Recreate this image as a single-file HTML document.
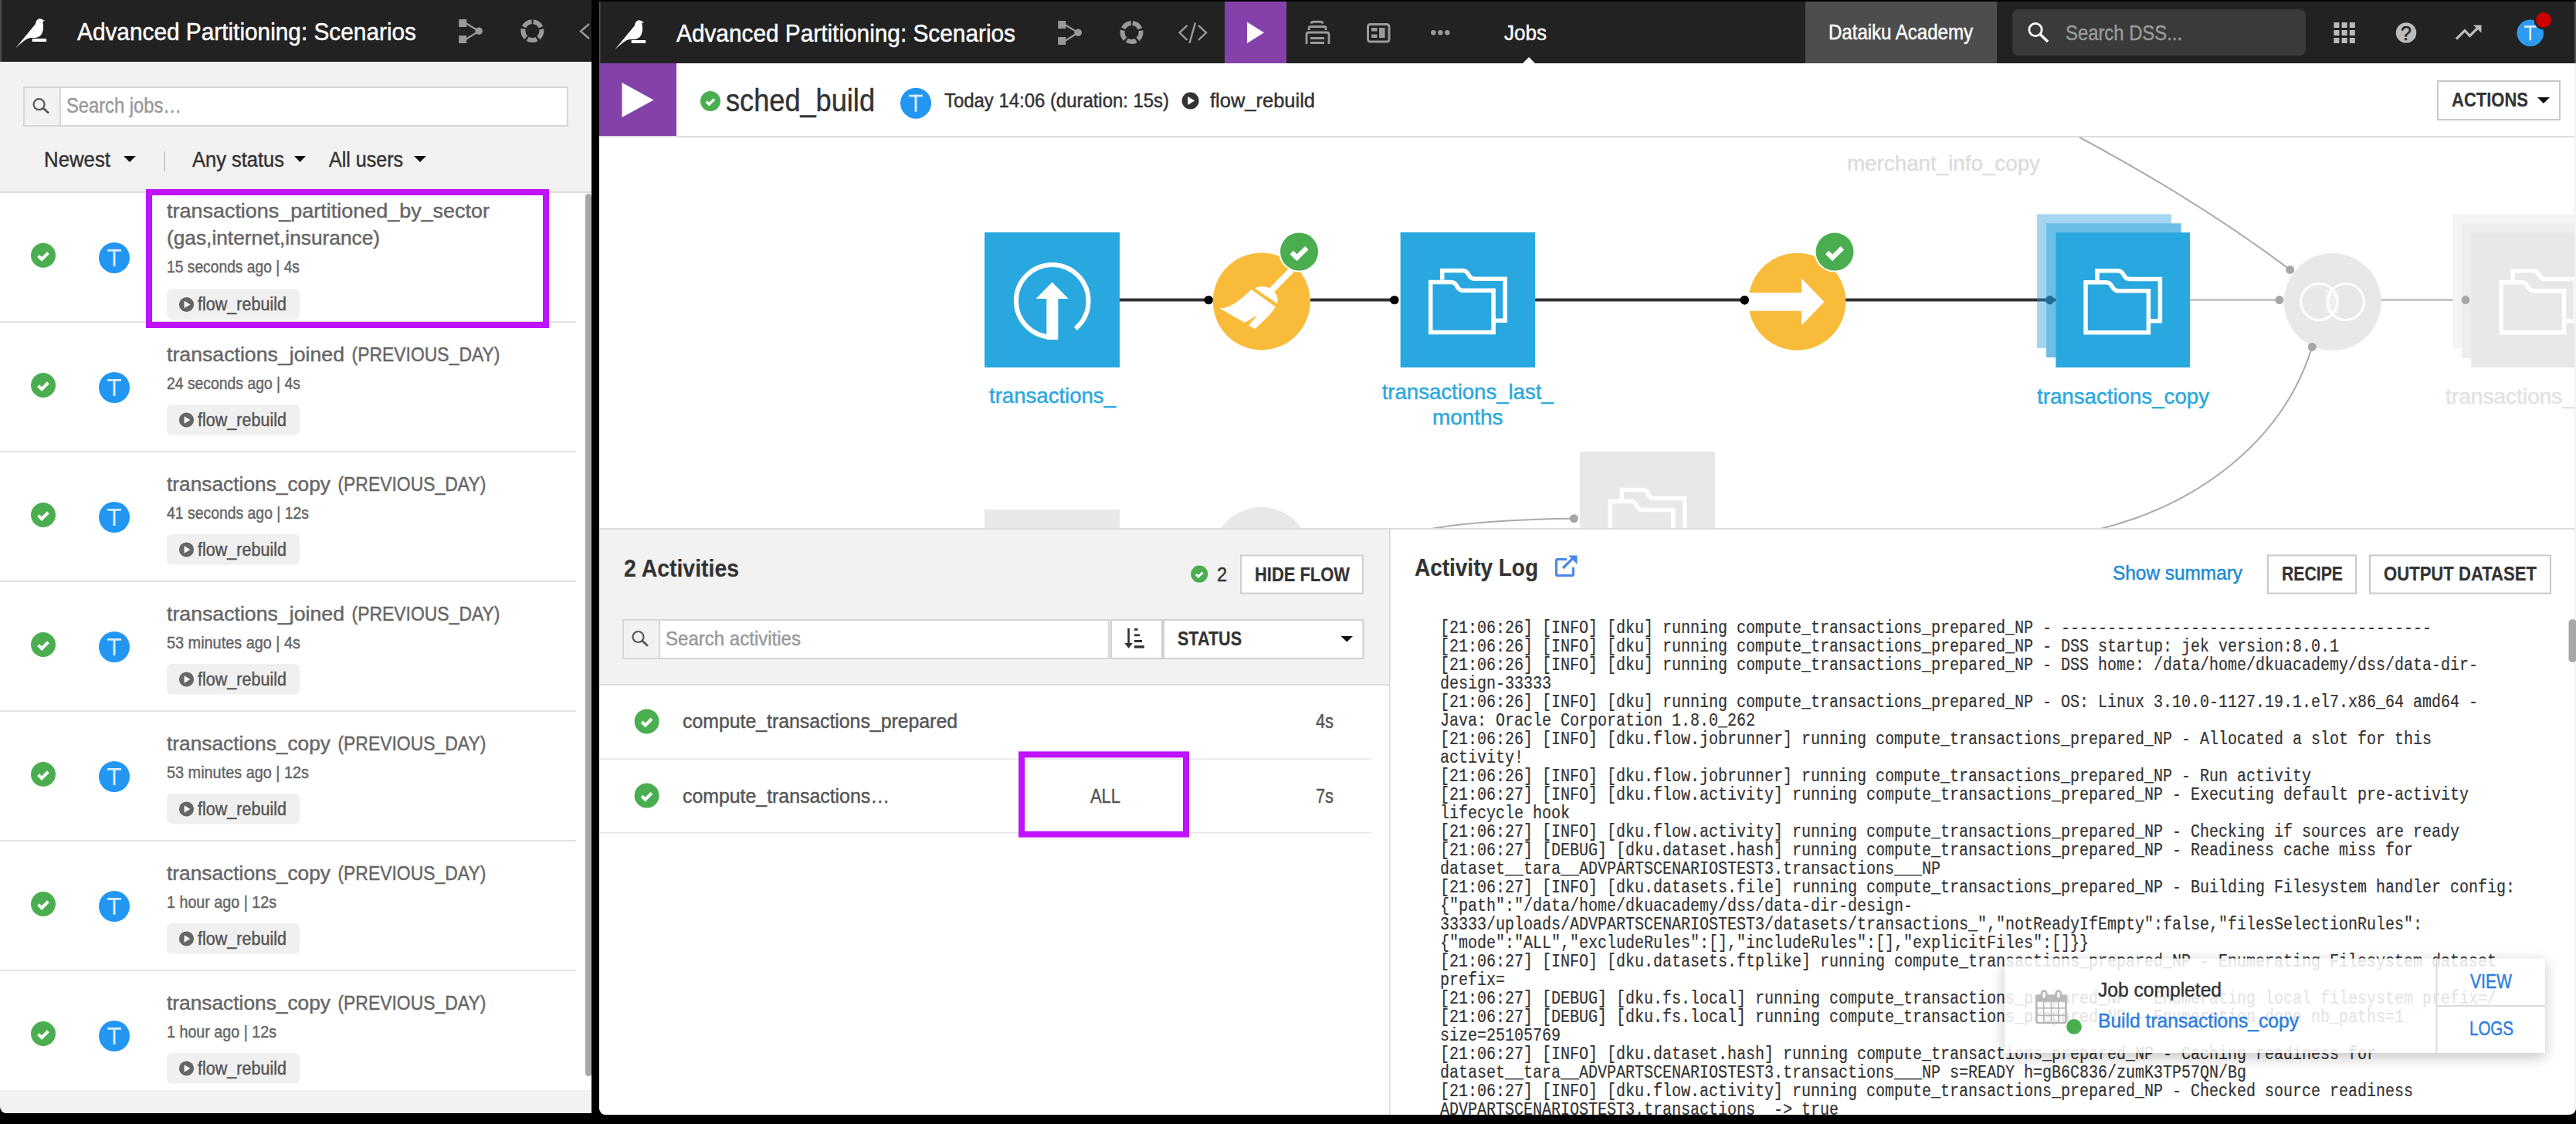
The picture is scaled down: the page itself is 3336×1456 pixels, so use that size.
<!DOCTYPE html>
<html><head><meta charset="utf-8"><title>Jobs - Dataiku</title>
<style>html,body{margin:0;padding:0;background:#000;width:3336px;height:1456px}
</style></head>
<body>
<svg width="3336" height="1456" viewBox="0 0 3336 1456" font-family="'Liberation Sans', sans-serif" style="display:block">
<rect x="0" y="0" width="3336" height="1456" fill="#000" />
<clipPath id="lp"><path d="M0 0 H766 V1442 H10 Q0 1442 0 1432 Z"/></clipPath>
<g clip-path="url(#lp)">
<rect x="0" y="0" width="766" height="1442" fill="#f2f2f2" />
<rect x="0" y="0" width="766" height="80" fill="#222" />
<rect x="0" y="0" width="2" height="80" fill="#4a4a4a" />
<path d="M20.0 62.5 L46.0 31.0 C46.5 26.5 49.0 24.3 51.5 24.3 C54.0 24.3 55.5 25.5 56.0 26.3 L58.3 26.0 L55.2 28.6 C56.5 33.0 56.5 40.0 54.0 44.0 C52.0 47.5 48.5 49.0 44.0 49.0 L40.0 49.0 C36.0 49.5 33.0 50.5 20.0 62.5 Z" fill="#fff" />
<rect x="41.7" y="50" width="18.4" height="4" fill="#fff" />
<text x="100" y="52" font-size="32" fill="#fff" stroke="#fff" stroke-width="0.45" textLength="439" lengthAdjust="spacingAndGlyphs" >Advanced Partitioning: Scenarios</text>
<rect x="594.2" y="25" width="10" height="10" fill="#999" />
<rect x="594.2" y="46" width="10" height="10" fill="#999" />
<circle cx="620.2" cy="40.2" r="4.8" fill="#999" />
<path d="M603.2 30 L620.2 40.2 L603.2 51" fill="none" stroke="#999" stroke-width="2.2" />
<circle cx="689.4" cy="40.1" r="12" fill="none" stroke="#999" stroke-width="6" stroke-dasharray="12.480 2.6" transform="rotate(-90 689.4 40.1)" stroke-dashoffset="-1.300"/>
<path d="M763 31 L752 40.5 L763 50" fill="none" stroke="#999" stroke-width="2.4" />
<rect x="31" y="113" width="704" height="50" fill="#fff" stroke="#d6d6d6" stroke-width="2"/>
<rect x="32" y="114" width="45" height="48" fill="#f2f2f2" />
<rect x="77" y="113" width="2" height="50" fill="#d6d6d6" />
<circle cx="50.6" cy="135.2" r="7" fill="none" stroke="#555" stroke-width="2.2"/>
<path d="M55.77 139.91 L63 146.5" fill="none" stroke="#555" stroke-width="2.8000000000000003" />
<text x="86" y="146" font-size="27" fill="#999" stroke="#999" stroke-width="0.45" textLength="149" lengthAdjust="spacingAndGlyphs" >Search jobs…</text>
<text x="57" y="216" font-size="27" fill="#333" stroke="#333" stroke-width="0.45" textLength="86" lengthAdjust="spacingAndGlyphs" >Newest</text>
<path d="M160 202 L176 202 L168.0 210 Z" fill="#111" />
<rect x="212" y="196" width="2" height="26" fill="#c8c8c8" />
<text x="249" y="216" font-size="27" fill="#333" stroke="#333" stroke-width="0.45" textLength="119" lengthAdjust="spacingAndGlyphs" >Any status</text>
<path d="M381 202 L396 202 L388.5 210 Z" fill="#111" />
<text x="426" y="216" font-size="27" fill="#333" stroke="#333" stroke-width="0.45" textLength="96" lengthAdjust="spacingAndGlyphs" >All users</text>
<path d="M536 202 L552 202 L544.0 210 Z" fill="#111" />
<rect x="0" y="248" width="766" height="2" fill="#dcdcdc" />
<rect x="0" y="250" width="766" height="1162" fill="#fff" />
<rect x="0" y="1412" width="766" height="30" fill="#f2f2f2" />
<circle cx="56" cy="330.8" r="16" fill="#4aae50" />
<path d="M49.60 331.44 L54.08 335.92 L62.40 327.60" fill="none" stroke="#fff" stroke-width="4.10" stroke-linecap="butt"/>
<circle cx="148" cy="333.9" r="20" fill="#2196f3" />
<rect x="139.00" y="322.90" width="18.00" height="2.80" fill="#d8ecfb" />
<rect x="146.50" y="322.90" width="3.00" height="22.00" fill="#d8ecfb" />
<text x="216" y="282" font-size="26" fill="#666" stroke="#666" stroke-width="0.45" textLength="418" lengthAdjust="spacingAndGlyphs" >transactions_partitioned_by_sector</text>
<text x="216" y="317" font-size="26" fill="#666" stroke="#666" stroke-width="0.45" textLength="276" lengthAdjust="spacingAndGlyphs" >(gas,internet,insurance)</text>
<text x="216" y="353" font-size="22" fill="#666" stroke="#666" stroke-width="0.45" textLength="172" lengthAdjust="spacingAndGlyphs" >15 seconds ago | 4s</text>
<rect x="216" y="374.5" width="172" height="39.5" fill="#f0f0f0" rx="6" />
<circle cx="241.5" cy="394.5" r="9.6" fill="#666" />
<path d="M238.62 389.70 L246.30 394.50 L238.62 399.30 Z" fill="#fff" />
<text x="256" y="402.0" font-size="23" fill="#555" stroke="#555" stroke-width="0.45" textLength="115" lengthAdjust="spacingAndGlyphs" >flow_rebuild</text>
<rect x="0" y="416" width="746" height="2" fill="#e2e2e2" />
<circle cx="56" cy="499" r="16" fill="#4aae50" />
<path d="M49.60 499.64 L54.08 504.12 L62.40 495.80" fill="none" stroke="#fff" stroke-width="4.10" stroke-linecap="butt"/>
<circle cx="148" cy="502" r="20" fill="#2196f3" />
<rect x="139.00" y="491.00" width="18.00" height="2.80" fill="#d8ecfb" />
<rect x="146.50" y="491.00" width="3.00" height="22.00" fill="#d8ecfb" />
<text x="216" y="468" font-size="26" fill="#666" stroke="#666" stroke-width="0.45" textLength="230" lengthAdjust="spacingAndGlyphs" >transactions_joined</text>
<text x="455.5" y="468" font-size="26" fill="#666" stroke="#666" stroke-width="0.45" textLength="192" lengthAdjust="spacingAndGlyphs" >(PREVIOUS_DAY)</text>
<text x="216" y="504" font-size="22" fill="#666" stroke="#666" stroke-width="0.45" textLength="173" lengthAdjust="spacingAndGlyphs" >24 seconds ago | 4s</text>
<rect x="216" y="524" width="172" height="39.5" fill="#f0f0f0" rx="6" />
<circle cx="241.5" cy="544" r="9.6" fill="#666" />
<path d="M238.62 539.20 L246.30 544.00 L238.62 548.80 Z" fill="#fff" />
<text x="256" y="551.5" font-size="23" fill="#555" stroke="#555" stroke-width="0.45" textLength="115" lengthAdjust="spacingAndGlyphs" >flow_rebuild</text>
<rect x="0" y="584" width="746" height="2" fill="#e2e2e2" />
<circle cx="56" cy="667" r="16" fill="#4aae50" />
<path d="M49.60 667.64 L54.08 672.12 L62.40 663.80" fill="none" stroke="#fff" stroke-width="4.10" stroke-linecap="butt"/>
<circle cx="148" cy="670" r="20" fill="#2196f3" />
<rect x="139.00" y="659.00" width="18.00" height="2.80" fill="#d8ecfb" />
<rect x="146.50" y="659.00" width="3.00" height="22.00" fill="#d8ecfb" />
<text x="216" y="636" font-size="26" fill="#666" stroke="#666" stroke-width="0.45" textLength="212" lengthAdjust="spacingAndGlyphs" >transactions_copy</text>
<text x="437.4" y="636" font-size="26" fill="#666" stroke="#666" stroke-width="0.45" textLength="192" lengthAdjust="spacingAndGlyphs" >(PREVIOUS_DAY)</text>
<text x="216" y="672" font-size="22" fill="#666" stroke="#666" stroke-width="0.45" textLength="184" lengthAdjust="spacingAndGlyphs" >41 seconds ago | 12s</text>
<rect x="216" y="692" width="172" height="39.5" fill="#f0f0f0" rx="6" />
<circle cx="241.5" cy="712" r="9.6" fill="#666" />
<path d="M238.62 707.20 L246.30 712.00 L238.62 716.80 Z" fill="#fff" />
<text x="256" y="719.5" font-size="23" fill="#555" stroke="#555" stroke-width="0.45" textLength="115" lengthAdjust="spacingAndGlyphs" >flow_rebuild</text>
<rect x="0" y="752" width="746" height="2" fill="#e2e2e2" />
<circle cx="56" cy="835" r="16" fill="#4aae50" />
<path d="M49.60 835.64 L54.08 840.12 L62.40 831.80" fill="none" stroke="#fff" stroke-width="4.10" stroke-linecap="butt"/>
<circle cx="148" cy="838" r="20" fill="#2196f3" />
<rect x="139.00" y="827.00" width="18.00" height="2.80" fill="#d8ecfb" />
<rect x="146.50" y="827.00" width="3.00" height="22.00" fill="#d8ecfb" />
<text x="216" y="804" font-size="26" fill="#666" stroke="#666" stroke-width="0.45" textLength="230" lengthAdjust="spacingAndGlyphs" >transactions_joined</text>
<text x="455.5" y="804" font-size="26" fill="#666" stroke="#666" stroke-width="0.45" textLength="192" lengthAdjust="spacingAndGlyphs" >(PREVIOUS_DAY)</text>
<text x="216" y="840" font-size="22" fill="#666" stroke="#666" stroke-width="0.45" textLength="173" lengthAdjust="spacingAndGlyphs" >53 minutes ago | 4s</text>
<rect x="216" y="860" width="172" height="39.5" fill="#f0f0f0" rx="6" />
<circle cx="241.5" cy="880" r="9.6" fill="#666" />
<path d="M238.62 875.20 L246.30 880.00 L238.62 884.80 Z" fill="#fff" />
<text x="256" y="887.5" font-size="23" fill="#555" stroke="#555" stroke-width="0.45" textLength="115" lengthAdjust="spacingAndGlyphs" >flow_rebuild</text>
<rect x="0" y="920" width="746" height="2" fill="#e2e2e2" />
<circle cx="56" cy="1003" r="16" fill="#4aae50" />
<path d="M49.60 1003.64 L54.08 1008.12 L62.40 999.80" fill="none" stroke="#fff" stroke-width="4.10" stroke-linecap="butt"/>
<circle cx="148" cy="1006" r="20" fill="#2196f3" />
<rect x="139.00" y="995.00" width="18.00" height="2.80" fill="#d8ecfb" />
<rect x="146.50" y="995.00" width="3.00" height="22.00" fill="#d8ecfb" />
<text x="216" y="972" font-size="26" fill="#666" stroke="#666" stroke-width="0.45" textLength="212" lengthAdjust="spacingAndGlyphs" >transactions_copy</text>
<text x="437.4" y="972" font-size="26" fill="#666" stroke="#666" stroke-width="0.45" textLength="192" lengthAdjust="spacingAndGlyphs" >(PREVIOUS_DAY)</text>
<text x="216" y="1008" font-size="22" fill="#666" stroke="#666" stroke-width="0.45" textLength="184" lengthAdjust="spacingAndGlyphs" >53 minutes ago | 12s</text>
<rect x="216" y="1028" width="172" height="39.5" fill="#f0f0f0" rx="6" />
<circle cx="241.5" cy="1048" r="9.6" fill="#666" />
<path d="M238.62 1043.20 L246.30 1048.00 L238.62 1052.80 Z" fill="#fff" />
<text x="256" y="1055.5" font-size="23" fill="#555" stroke="#555" stroke-width="0.45" textLength="115" lengthAdjust="spacingAndGlyphs" >flow_rebuild</text>
<rect x="0" y="1088" width="746" height="2" fill="#e2e2e2" />
<circle cx="56" cy="1171" r="16" fill="#4aae50" />
<path d="M49.60 1171.64 L54.08 1176.12 L62.40 1167.80" fill="none" stroke="#fff" stroke-width="4.10" stroke-linecap="butt"/>
<circle cx="148" cy="1174" r="20" fill="#2196f3" />
<rect x="139.00" y="1163.00" width="18.00" height="2.80" fill="#d8ecfb" />
<rect x="146.50" y="1163.00" width="3.00" height="22.00" fill="#d8ecfb" />
<text x="216" y="1140" font-size="26" fill="#666" stroke="#666" stroke-width="0.45" textLength="212" lengthAdjust="spacingAndGlyphs" >transactions_copy</text>
<text x="437.4" y="1140" font-size="26" fill="#666" stroke="#666" stroke-width="0.45" textLength="192" lengthAdjust="spacingAndGlyphs" >(PREVIOUS_DAY)</text>
<text x="216" y="1176" font-size="22" fill="#666" stroke="#666" stroke-width="0.45" textLength="142" lengthAdjust="spacingAndGlyphs" >1 hour ago | 12s</text>
<rect x="216" y="1196" width="172" height="39.5" fill="#f0f0f0" rx="6" />
<circle cx="241.5" cy="1216" r="9.6" fill="#666" />
<path d="M238.62 1211.20 L246.30 1216.00 L238.62 1220.80 Z" fill="#fff" />
<text x="256" y="1223.5" font-size="23" fill="#555" stroke="#555" stroke-width="0.45" textLength="115" lengthAdjust="spacingAndGlyphs" >flow_rebuild</text>
<rect x="0" y="1256" width="746" height="2" fill="#e2e2e2" />
<circle cx="56" cy="1339" r="16" fill="#4aae50" />
<path d="M49.60 1339.64 L54.08 1344.12 L62.40 1335.80" fill="none" stroke="#fff" stroke-width="4.10" stroke-linecap="butt"/>
<circle cx="148" cy="1342" r="20" fill="#2196f3" />
<rect x="139.00" y="1331.00" width="18.00" height="2.80" fill="#d8ecfb" />
<rect x="146.50" y="1331.00" width="3.00" height="22.00" fill="#d8ecfb" />
<text x="216" y="1308" font-size="26" fill="#666" stroke="#666" stroke-width="0.45" textLength="212" lengthAdjust="spacingAndGlyphs" >transactions_copy</text>
<text x="437.4" y="1308" font-size="26" fill="#666" stroke="#666" stroke-width="0.45" textLength="192" lengthAdjust="spacingAndGlyphs" >(PREVIOUS_DAY)</text>
<text x="216" y="1344" font-size="22" fill="#666" stroke="#666" stroke-width="0.45" textLength="142" lengthAdjust="spacingAndGlyphs" >1 hour ago | 12s</text>
<rect x="216" y="1364" width="172" height="39.5" fill="#f0f0f0" rx="6" />
<circle cx="241.5" cy="1384" r="9.6" fill="#666" />
<path d="M238.62 1379.20 L246.30 1384.00 L238.62 1388.80 Z" fill="#fff" />
<text x="256" y="1391.5" font-size="23" fill="#555" stroke="#555" stroke-width="0.45" textLength="115" lengthAdjust="spacingAndGlyphs" >flow_rebuild</text>
<rect x="193" y="249" width="514" height="172" fill="none" stroke="#bf12fd" stroke-width="8"/>
<rect x="758" y="251" width="8" height="1143" fill="#a8a8a8" rx="4" />
</g>
<clipPath id="rp"><path d="M776 2 H3336 V1434 Q3336 1444 3326 1444 H786 Q776 1444 776 1434 Z"/></clipPath>
<g clip-path="url(#rp)">
<rect x="776" y="2" width="2560" height="1442" fill="#fff" />
<rect x="776" y="2" width="2560" height="80" fill="#222" />
<rect x="776" y="2" width="1.5" height="80" fill="#555" />
<path d="M796.0 64.5 L822.0 33.0 C822.5 28.5 825.0 26.3 827.5 26.3 C830.0 26.3 831.5 27.5 832.0 28.3 L834.3 28.0 L831.2 30.6 C832.5 35.0 832.5 42.0 830.0 46.0 C828.0 49.5 824.5 51.0 820.0 51.0 L816.0 51.0 C812.0 51.5 809.0 52.5 796.0 64.5 Z" fill="#fff" />
<rect x="817.7" y="52" width="18.4" height="4" fill="#fff" />
<text x="876" y="54" font-size="32" fill="#fff" stroke="#fff" stroke-width="0.45" textLength="439" lengthAdjust="spacingAndGlyphs" >Advanced Partitioning: Scenarios</text>
<rect x="1370.2" y="27" width="10" height="10" fill="#999" />
<rect x="1370.2" y="48" width="10" height="10" fill="#999" />
<circle cx="1396.2" cy="42.2" r="4.8" fill="#999" />
<path d="M1379.2 32 L1396.2 42.2 L1379.2 53" fill="none" stroke="#999" stroke-width="2.2" />
<circle cx="1465.5" cy="42" r="12" fill="none" stroke="#999" stroke-width="6" stroke-dasharray="12.480 2.6" transform="rotate(-90 1465.5 42)" stroke-dashoffset="-1.300"/>
<path d="M1537.5 32.8 L1527.5 42.3 L1537.5 51.8" fill="none" stroke="#999" stroke-width="2.4" />
<path d="M1548 29.299999999999997 L1540.5 55.8" fill="none" stroke="#999" stroke-width="2.4" />
<path d="M1552 32.8 L1562 42.3 L1552 51.8" fill="none" stroke="#999" stroke-width="2.4" />
<rect x="1586" y="2" width="80" height="80" fill="#8541aa" />
<path d="M1615 28.5 L1637 42.2 L1615 56 Z" fill="#fff" />
<path d="M1697.8 30.5 Q1698.5 28.2 1701 28.2 L1710 28.2 Q1712.5 28.2 1713.2 30.5" fill="none" stroke="#9a9a9a" stroke-width="3" />
<path d="M1695 39 L1695 36.5 Q1695 34.5 1698 34.5 L1714.5 34.5 Q1717 34.5 1717 36.5 L1717 39" fill="none" stroke="#9a9a9a" stroke-width="2.8" />
<path d="M1692 57 L1692 45 Q1692 42 1695 42 L1718 42 Q1721 42 1721 45 L1721 57" fill="none" stroke="#9a9a9a" stroke-width="2.8" />
<rect x="1697" y="48" width="18" height="3" fill="#9a9a9a" />
<rect x="1697" y="54" width="18" height="3" fill="#9a9a9a" />
<rect x="1771.5" y="31.5" width="27.5" height="22.5" fill="none" rx="3" stroke="#9a9a9a" stroke-width="3"/>
<rect x="1776" y="36" width="7.5" height="4.5" fill="#9a9a9a" />
<rect x="1776" y="44.5" width="7.5" height="4.5" fill="#9a9a9a" />
<rect x="1786" y="36" width="7.5" height="13" fill="#9a9a9a" />
<circle cx="1856.3" cy="42.2" r="3.2" fill="#9a9a9a" />
<circle cx="1865.3" cy="42.2" r="3.2" fill="#9a9a9a" />
<circle cx="1874.3" cy="42.2" r="3.2" fill="#9a9a9a" />
<text x="1948" y="52.3" font-size="28" fill="#fff" stroke="#fff" stroke-width="0.45" textLength="55" lengthAdjust="spacingAndGlyphs" >Jobs</text>
<path d="M1972 82 L1980 74 L1988 82 Z" fill="#fff" />
<rect x="2338" y="2" width="248" height="80" fill="#4d4d4d" />
<text x="2368" y="50.5" font-size="28" fill="#fff" stroke="#fff" stroke-width="0.45" textLength="187" lengthAdjust="spacingAndGlyphs" >Dataiku Academy</text>
<rect x="2606" y="12" width="380" height="60" fill="#3a3a3a" rx="8" />
<circle cx="2636" cy="38.5" r="8.2" fill="none" stroke="#fff" stroke-width="2.8"/>
<path d="M2641.89 44.21 L2652 54" fill="none" stroke="#fff" stroke-width="3.4" />
<text x="2675" y="52" font-size="28" fill="#9a9a9a" stroke="#9a9a9a" stroke-width="0.45" textLength="151" lengthAdjust="spacingAndGlyphs" >Search DSS...</text>
<rect x="3022.4" y="29" width="7" height="7" fill="#bbb" />
<rect x="3022.4" y="39" width="7" height="7" fill="#bbb" />
<rect x="3022.4" y="49" width="7" height="7" fill="#bbb" />
<rect x="3032.6" y="29" width="7" height="7" fill="#bbb" />
<rect x="3032.6" y="39" width="7" height="7" fill="#bbb" />
<rect x="3032.6" y="49" width="7" height="7" fill="#bbb" />
<rect x="3042.8" y="29" width="7" height="7" fill="#bbb" />
<rect x="3042.8" y="39" width="7" height="7" fill="#bbb" />
<rect x="3042.8" y="49" width="7" height="7" fill="#bbb" />
<circle cx="3116" cy="42.4" r="13.2" fill="#bbb" />
<text x="3116" y="51.5" font-size="25" fill="#222" stroke="#222" stroke-width="0.45" text-anchor="middle" >?</text>
<path d="M3181 50.5 L3192 39.5 L3198.5 46.5 L3211 34" fill="none" stroke="#bbb" stroke-width="3.2" />
<path d="M3203 32.5 L3213.5 32.5 L3213.5 42.5 Z" fill="#bbb" />
<circle cx="3276.8" cy="42.8" r="17.3" fill="#2d9cf0" />
<rect x="3269.02" y="33.28" width="15.57" height="2.42" fill="#e6f3fd" />
<rect x="3275.50" y="33.28" width="2.59" height="19.03" fill="#e6f3fd" />
<circle cx="3294.1" cy="25.9" r="12.5" fill="#222" />
<circle cx="3294.1" cy="25.9" r="9.9" fill="#cc0000" />
<rect x="776" y="82" width="100" height="94" fill="#8541aa" />
<path d="M805.5 107 L846.5 129.6 L805.5 152 Z" fill="#fff" />
<rect x="776" y="176" width="2560" height="2" fill="#dedede" />
<circle cx="920" cy="131" r="13" fill="#4aae50" />
<path d="M914.80 131.52 L918.44 135.16 L925.20 128.40" fill="none" stroke="#fff" stroke-width="3.33" stroke-linecap="butt"/>
<text x="940" y="144" font-size="40" fill="#333" stroke="#333" stroke-width="0.45" textLength="193" lengthAdjust="spacingAndGlyphs" >sched_build</text>
<circle cx="1186" cy="133.7" r="20" fill="#2196f3" />
<rect x="1177.00" y="122.70" width="18.00" height="2.80" fill="#d8ecfb" />
<rect x="1184.50" y="122.70" width="3.00" height="22.00" fill="#d8ecfb" />
<text x="1223" y="139" font-size="25" fill="#333" stroke="#333" stroke-width="0.45" textLength="291" lengthAdjust="spacingAndGlyphs" >Today 14:06 (duration: 15s)</text>
<circle cx="1541.6" cy="130.5" r="11" fill="#333" />
<path d="M1538.30 125.00 L1547.10 130.50 L1538.30 136.00 Z" fill="#fff" />
<text x="1567" y="139" font-size="25" fill="#333" stroke="#333" stroke-width="0.45" textLength="136" lengthAdjust="spacingAndGlyphs" >flow_rebuild</text>
<rect x="3157" y="105" width="158" height="50" fill="#fff" stroke="#c8c8c8" stroke-width="2"/>
<text x="3175" y="138" font-size="26" fill="#333" stroke="#333" stroke-width="0.2" font-weight="700" textLength="99" lengthAdjust="spacingAndGlyphs" >ACTIONS</text>
<path d="M3286 126 L3302 126 L3294.0 134 Z" fill="#111" />
<clipPath id="fc"><rect x="776" y="178" width="2560" height="506"/></clipPath>
<g clip-path="url(#fc)">
<path d="M1450 388.5 L1565 388.5" fill="none" stroke="#333" stroke-width="4" />
<circle cx="1565.2" cy="388.6" r="5.7" fill="#000" />
<path d="M1697 388.5 L1806 388.5" fill="none" stroke="#333" stroke-width="4" />
<circle cx="1805.8" cy="388.6" r="5.7" fill="#000" />
<path d="M1988 388.5 L2259 388.5" fill="none" stroke="#333" stroke-width="4" />
<circle cx="2259.3" cy="388.7" r="5.7" fill="#000" />
<path d="M2390 388.5 L2655 388.5" fill="none" stroke="#333" stroke-width="4" />
<path d="M2692.5 177.5 C2787 228.3 2879 284.1 2965.7 349.4" fill="none" stroke="#aaa" stroke-width="2" />
<path d="M2994.2 449.4 C2956.4 572.4 2845.7 653.4 2720 685" fill="none" stroke="#aaa" stroke-width="2" />
<path d="M1848 686 C1900 676 1990 671.7 2038.3 671.7" fill="none" stroke="#aaa" stroke-width="2" />
<path d="M2836 388.6 L2952 388.6" fill="none" stroke="#aaa" stroke-width="2" />
<path d="M3080 388.6 L3193 388.6" fill="none" stroke="#aaa" stroke-width="2" />
<rect x="1275" y="301" width="175" height="175" fill="#29a8df" />
<circle cx="1362.7" cy="389.8" r="46.8" fill="none" stroke="#fff" stroke-width="6" stroke-dasharray="261 40" transform="rotate(90 1362.7 389.8)"/>
<path d="M1341.5 387 L1362.6 365.5 L1383.7 387 Z" fill="#fff" />
<rect x="1355.3" y="385" width="15" height="55" fill="#fff" />
<text x="1281" y="521.7" font-size="28" fill="#29a8df" stroke="#29a8df" stroke-width="0.45" textLength="164" lengthAdjust="spacingAndGlyphs" >transactions_</text>
<circle cx="1633.8" cy="390.4" r="63" fill="#f9bc3a" />
<g fill="#fff">
<path d="M1668.2 348.4 L1676 351.9 L1650.4 378.3 L1644 373.3 Z" />
<path d="M1624.8 373.3 C1629.8 370.9 1638.3 370.4 1644 373.3 L1650.4 378.3 C1654 381.8 1655.4 388.2 1654 393.2 Z" />
<path d="M1620.5 375.1 L1651.8 397.5 L1644.7 407.4 L1625.5 425.9 L1617 421.7 L1628.3 408.2 L1612 418.1 L1579.3 399.3 C1591.3 399.6 1602.7 391.1 1612.7 382.3 Z" />
</g>
<circle cx="1682.5" cy="326" r="26.5" fill="#fff" />
<circle cx="1682.5" cy="326" r="24.5" fill="#4aae50" />
<path d="M1672.70 326.98 L1679.56 333.84 L1692.30 321.10" fill="none" stroke="#fff" stroke-width="6.27" stroke-linecap="butt"/>
<rect x="1813.6" y="301" width="174.4" height="175" fill="#29a8df" />
<path d="M1867.70 362.60 L1867.70 350.40 L1894.40 350.40 C1899.00 350.40 1900.50 353.00 1902.00 356.00 C1904.00 360.00 1906.00 361.20 1909.50 361.20 L1949.10 361.20 L1949.10 415.30 L1936.00 415.30" fill="none" stroke="#fff" stroke-width="5.5" stroke-linejoin="miter"/>
<path d="M1852.70 430.50 L1852.70 365.40 L1879.50 365.40 C1884.00 365.40 1885.50 368.00 1887.00 371.00 C1889.00 375.00 1891.00 376.30 1894.50 376.30 L1934.10 376.30 L1934.10 430.50 Z" fill="none" stroke="#fff" stroke-width="5.5" stroke-linejoin="miter"/>
<text x="1789.7" y="517" font-size="28" fill="#29a8df" stroke="#29a8df" stroke-width="0.45" textLength="222" lengthAdjust="spacingAndGlyphs" >transactions_last_</text>
<text x="1855" y="549.7" font-size="28" fill="#29a8df" stroke="#29a8df" stroke-width="0.45" textLength="91.5" lengthAdjust="spacingAndGlyphs" >months</text>
<circle cx="2327.3" cy="390.8" r="63" fill="#f9bc3a" />
<path d="M2264 379.3 L2333 379.3 L2333 360.6 L2362.5 391 L2333 421.5 L2333 402.8 L2264 402.8 Z" fill="#fff" />
<circle cx="2259.3" cy="388.7" r="5.7" fill="#000" />
<circle cx="2376" cy="326.1" r="26.5" fill="#fff" />
<circle cx="2376" cy="326.1" r="24.5" fill="#4aae50" />
<path d="M2366.20 327.08 L2373.06 333.94 L2385.80 321.20" fill="none" stroke="#fff" stroke-width="6.27" stroke-linecap="butt"/>
<rect x="2638" y="277.4" width="174" height="173.6" fill="#a3d5f0" />
<rect x="2650" y="289.3" width="174.7" height="173.7" fill="#6cbde8" />
<rect x="2662.3" y="301.2" width="173.7" height="174.8" fill="#29a8df" />
<path d="M2638 388.5 L2662 388.5" fill="none" stroke="#2a5d7c" stroke-width="4" />
<circle cx="2654.6" cy="388.7" r="5.7" fill="#1f6f9b" />
<path d="M2716.00 362.95 L2716.00 350.75 L2742.70 350.75 C2747.30 350.75 2748.80 353.35 2750.30 356.35 C2752.30 360.35 2754.30 361.55 2757.80 361.55 L2797.40 361.55 L2797.40 415.65 L2784.30 415.65" fill="none" stroke="#fff" stroke-width="5.5" stroke-linejoin="miter"/>
<path d="M2701.00 430.85 L2701.00 365.75 L2727.80 365.75 C2732.30 365.75 2733.80 368.35 2735.30 371.35 C2737.30 375.35 2739.30 376.65 2742.80 376.65 L2782.40 376.65 L2782.40 430.85 Z" fill="none" stroke="#fff" stroke-width="5.5" stroke-linejoin="miter"/>
<text x="2638" y="522.7" font-size="28" fill="#29a8df" stroke="#29a8df" stroke-width="0.45" textLength="223" lengthAdjust="spacingAndGlyphs" >transactions_copy</text>
<text x="2392" y="220.8" font-size="28" fill="#dcdcdc" stroke="#dcdcdc" stroke-width="0.45" textLength="250" lengthAdjust="spacingAndGlyphs" >merchant_info_copy</text>
<circle cx="3020.8" cy="391" r="63" fill="#e8e8e8" />
<circle cx="3003.2" cy="391" r="23.5" fill="none" stroke="#fff" stroke-width="3.2"/>
<circle cx="3038" cy="391" r="23.5" fill="none" stroke="#fff" stroke-width="3.2"/>
<path d="M3012 377 L3029 377" fill="none" stroke="#fff" stroke-width="1" />
<path d="M3012 380 L3029 380" fill="none" stroke="#fff" stroke-width="1" />
<path d="M3012 383 L3029 383" fill="none" stroke="#fff" stroke-width="1" />
<path d="M3012 386 L3029 386" fill="none" stroke="#fff" stroke-width="1" />
<path d="M3012 389 L3029 389" fill="none" stroke="#fff" stroke-width="1" />
<path d="M3012 392 L3029 392" fill="none" stroke="#fff" stroke-width="1" />
<path d="M3012 395 L3029 395" fill="none" stroke="#fff" stroke-width="1" />
<path d="M3012 398 L3029 398" fill="none" stroke="#fff" stroke-width="1" />
<path d="M3012 401 L3029 401" fill="none" stroke="#fff" stroke-width="1" />
<path d="M3012 404 L3029 404" fill="none" stroke="#fff" stroke-width="1" />
<circle cx="2951.9" cy="388.6" r="5.5" fill="#a6a6a6" />
<circle cx="2965.7" cy="349.4" r="5.5" fill="#a6a6a6" />
<circle cx="2994.2" cy="449.4" r="5.5" fill="#a6a6a6" />
<rect x="3176.4" y="277.6" width="200" height="174.2" fill="#f4f4f4" />
<rect x="3188" y="289" width="200" height="175" fill="#eeeeee" />
<rect x="3200.3" y="301.2" width="200" height="174.8" fill="#e8e8e8" />
<path d="M3254.20 362.95 L3254.20 350.75 L3280.90 350.75 C3285.50 350.75 3287.00 353.35 3288.50 356.35 C3290.50 360.35 3292.50 361.55 3296.00 361.55 L3335.60 361.55 L3335.60 415.65 L3322.50 415.65" fill="none" stroke="#fff" stroke-width="5.5" stroke-linejoin="miter"/>
<path d="M3239.20 430.85 L3239.20 365.75 L3266.00 365.75 C3270.50 365.75 3272.00 368.35 3273.50 371.35 C3275.50 375.35 3277.50 376.65 3281.00 376.65 L3320.60 376.65 L3320.60 430.85 Z" fill="none" stroke="#fff" stroke-width="5.5" stroke-linejoin="miter"/>
<circle cx="3193" cy="388.6" r="5.5" fill="#a6a6a6" />
<text x="3167" y="522.7" font-size="28" fill="#e2e2e2" stroke="#e2e2e2" stroke-width="0.45" textLength="242" lengthAdjust="spacingAndGlyphs" >transactions_joined</text>
<rect x="1275" y="660" width="175" height="30" fill="#e8e8e8" />
<circle cx="1633.4" cy="720" r="63" fill="#e8e8e8" />
<rect x="2046" y="585" width="174.8" height="105" fill="#e8e8e8" />
<path d="M2100.30 646.80 L2100.30 634.60 L2127.00 634.60 C2131.60 634.60 2133.10 637.20 2134.60 640.20 C2136.60 644.20 2138.60 645.40 2142.10 645.40 L2181.70 645.40 L2181.70 699.50 L2168.60 699.50" fill="none" stroke="#fff" stroke-width="5.5" stroke-linejoin="miter"/>
<path d="M2085.30 714.70 L2085.30 649.60 L2112.10 649.60 C2116.60 649.60 2118.10 652.20 2119.60 655.20 C2121.60 659.20 2123.60 660.50 2127.10 660.50 L2166.70 660.50 L2166.70 714.70 Z" fill="none" stroke="#fff" stroke-width="5.5" stroke-linejoin="miter"/>
<circle cx="2038.3" cy="671.7" r="5.5" fill="#a6a6a6" />
</g>
<rect x="776" y="684" width="2560" height="2" fill="#dcdcdc" />
<rect x="776" y="686" width="1023" height="200" fill="#f2f2f2" />
<rect x="776" y="886" width="1023" height="2" fill="#dcdcdc" />
<rect x="1799" y="686" width="1.5" height="758" fill="#d8d8d8" />
<text x="808" y="746.8" font-size="31" fill="#333" stroke="#333" stroke-width="0.2" font-weight="700" textLength="149" lengthAdjust="spacingAndGlyphs" >2 Activities</text>
<circle cx="1553.2" cy="743.6" r="11" fill="#4aae50" />
<path d="M1548.80 744.04 L1551.88 747.12 L1557.60 741.40" fill="none" stroke="#fff" stroke-width="2.82" stroke-linecap="butt"/>
<text x="1576" y="752.5" font-size="25" fill="#333" stroke="#333" stroke-width="0.45" textLength="13" lengthAdjust="spacingAndGlyphs" >2</text>
<rect x="1607" y="719.5" width="158" height="49" fill="#fff" stroke="#cfcfcf" stroke-width="2"/>
<text x="1625" y="752.7" font-size="26" fill="#333" stroke="#333" stroke-width="0.2" font-weight="700" textLength="123" lengthAdjust="spacingAndGlyphs" >HIDE FLOW</text>
<rect x="807" y="803" width="629" height="50" fill="#fff" stroke="#d6d6d6" stroke-width="2"/>
<rect x="808" y="804" width="45" height="48" fill="#f2f2f2" />
<rect x="853" y="803" width="2" height="50" fill="#d6d6d6" />
<circle cx="826.5" cy="825" r="7" fill="none" stroke="#555" stroke-width="2.2"/>
<path d="M831.57 829.83 L838.9 836.8" fill="none" stroke="#555" stroke-width="2.8000000000000003" />
<text x="862" y="836" font-size="26" fill="#999" stroke="#999" stroke-width="0.45" textLength="175" lengthAdjust="spacingAndGlyphs" >Search activities</text>
<rect x="1439" y="803" width="66" height="50" fill="#fff" stroke="#d0d0d0" stroke-width="2"/>
<rect x="1507" y="803" width="258.5" height="50" fill="#fff" stroke="#d0d0d0" stroke-width="2"/>
<rect x="1460.3" y="813.8" width="2.6" height="21" fill="#333" />
<path d="M1456.2 833 L1466.9 833 L1461.6 839.8 Z" fill="#333" />
<rect x="1468.9" y="814" width="4.6" height="2.8" fill="#333" />
<rect x="1468.9" y="821.4" width="7.1" height="2.8" fill="#333" />
<rect x="1468.9" y="829" width="10.1" height="3" fill="#333" />
<rect x="1468.9" y="836.2" width="13" height="3.4" fill="#333" />
<text x="1525" y="836.1" font-size="26" fill="#333" stroke="#333" stroke-width="0.2" font-weight="700" textLength="83" lengthAdjust="spacingAndGlyphs" >STATUS</text>
<path d="M1736.5 824 L1752 824 L1744.25 831.6 Z" fill="#111" />
<rect x="776" y="888" width="1023" height="556" fill="#fff" />
<circle cx="837.6" cy="934.4" r="16" fill="#4aae50" />
<path d="M831.20 935.04 L835.68 939.52 L844.00 931.20" fill="none" stroke="#fff" stroke-width="4.10" stroke-linecap="butt"/>
<text x="884" y="943.2" font-size="26" fill="#555" stroke="#555" stroke-width="0.45" textLength="356" lengthAdjust="spacingAndGlyphs" >compute_transactions_prepared</text>
<text x="1704" y="943.2" font-size="26" fill="#555" stroke="#555" stroke-width="0.45" textLength="23" lengthAdjust="spacingAndGlyphs" >4s</text>
<rect x="776" y="982.5" width="1000" height="1.5" fill="#e6e6e6" />
<circle cx="837.6" cy="1030.6" r="16" fill="#4aae50" />
<path d="M831.20 1031.24 L835.68 1035.72 L844.00 1027.40" fill="none" stroke="#fff" stroke-width="4.10" stroke-linecap="butt"/>
<text x="884" y="1039.8" font-size="26" fill="#555" stroke="#555" stroke-width="0.45" textLength="268" lengthAdjust="spacingAndGlyphs" >compute_transactions…</text>
<text x="1412" y="1039.8" font-size="26" fill="#555" stroke="#555" stroke-width="0.45" textLength="39" lengthAdjust="spacingAndGlyphs" >ALL</text>
<text x="1704" y="1039.8" font-size="26" fill="#555" stroke="#555" stroke-width="0.45" textLength="23" lengthAdjust="spacingAndGlyphs" >7s</text>
<rect x="776" y="1078" width="1000" height="1.5" fill="#e6e6e6" />
<rect x="1323" y="977.4" width="213" height="103.3" fill="none" stroke="#bf12fd" stroke-width="8"/>
<text x="1832" y="745.8" font-size="31" fill="#333" stroke="#333" stroke-width="0.2" font-weight="700" textLength="160" lengthAdjust="spacingAndGlyphs" >Activity Log</text>
<path d="M2029 724.5 L2017 724.5 Q2015.5 724.5 2015.5 726 L2015.5 744 Q2015.5 745.5 2017 745.5 L2036 745.5 Q2037.5 745.5 2037.5 744 L2037.5 735" fill="none" stroke="#4a86e8" stroke-width="3" />
<path d="M2024 736 L2039 721" fill="none" stroke="#4a86e8" stroke-width="3.2" />
<path d="M2031 719.5 L2042.5 719.5 L2042.5 731 Z" fill="#4a86e8" />
<text x="2736" y="751.2" font-size="26" fill="#1a8ad4" stroke="#1a8ad4" stroke-width="0.45" textLength="168" lengthAdjust="spacingAndGlyphs" >Show summary</text>
<rect x="2937" y="719.4" width="114" height="49.2" fill="#fff" stroke="#c8c8c8" stroke-width="2"/>
<text x="2955" y="752.2" font-size="26" fill="#333" stroke="#333" stroke-width="0.2" font-weight="700" textLength="79" lengthAdjust="spacingAndGlyphs" >RECIPE</text>
<rect x="3069" y="719.4" width="234" height="49.2" fill="#fff" stroke="#c8c8c8" stroke-width="2"/>
<text x="3087" y="752.2" font-size="26" fill="#333" stroke="#333" stroke-width="0.2" font-weight="700" textLength="198" lengthAdjust="spacingAndGlyphs" >OUTPUT DATASET</text>
<g font-family="'Liberation Mono', monospace" font-size="23.5" fill="#333" stroke="#333" stroke-width="0.2" style="white-space:pre">
<text x="1865" y="819.9" textLength="1284" lengthAdjust="spacingAndGlyphs" xml:space="preserve">[21:06:26] [INFO] [dku] running compute_transactions_prepared_NP - ----------------------------------------</text>
<text x="1865" y="843.9" textLength="1164" lengthAdjust="spacingAndGlyphs" xml:space="preserve">[21:06:26] [INFO] [dku] running compute_transactions_prepared_NP - DSS startup: jek version:8.0.1</text>
<text x="1865" y="867.9" textLength="1344" lengthAdjust="spacingAndGlyphs" xml:space="preserve">[21:06:26] [INFO] [dku] running compute_transactions_prepared_NP - DSS home: /data/home/dkuacademy/dss/data-dir-</text>
<text x="1865" y="891.9" textLength="144" lengthAdjust="spacingAndGlyphs" xml:space="preserve">design-33333</text>
<text x="1865" y="915.9" textLength="1344" lengthAdjust="spacingAndGlyphs" xml:space="preserve">[21:06:26] [INFO] [dku] running compute_transactions_prepared_NP - OS: Linux 3.10.0-1127.19.1.el7.x86_64 amd64 -</text>
<text x="1865" y="939.9" textLength="408" lengthAdjust="spacingAndGlyphs" xml:space="preserve">Java: Oracle Corporation 1.8.0_262</text>
<text x="1865" y="963.9" textLength="1284" lengthAdjust="spacingAndGlyphs" xml:space="preserve">[21:06:26] [INFO] [dku.flow.jobrunner] running compute_transactions_prepared_NP - Allocated a slot for this</text>
<text x="1865" y="987.9" textLength="108" lengthAdjust="spacingAndGlyphs" xml:space="preserve">activity!</text>
<text x="1865" y="1011.9" textLength="1128" lengthAdjust="spacingAndGlyphs" xml:space="preserve">[21:06:26] [INFO] [dku.flow.jobrunner] running compute_transactions_prepared_NP - Run activity</text>
<text x="1865" y="1035.9" textLength="1332" lengthAdjust="spacingAndGlyphs" xml:space="preserve">[21:06:27] [INFO] [dku.flow.activity] running compute_transactions_prepared_NP - Executing default pre-activity</text>
<text x="1865" y="1059.9" textLength="168" lengthAdjust="spacingAndGlyphs" xml:space="preserve">lifecycle hook</text>
<text x="1865" y="1083.9" textLength="1320" lengthAdjust="spacingAndGlyphs" xml:space="preserve">[21:06:27] [INFO] [dku.flow.activity] running compute_transactions_prepared_NP - Checking if sources are ready</text>
<text x="1865" y="1107.9" textLength="1260" lengthAdjust="spacingAndGlyphs" xml:space="preserve">[21:06:27] [DEBUG] [dku.dataset.hash] running compute_transactions_prepared_NP - Readiness cache miss for</text>
<text x="1865" y="1131.9" textLength="648" lengthAdjust="spacingAndGlyphs" xml:space="preserve">dataset__tara__ADVPARTSCENARIOSTEST3.transactions___NP</text>
<text x="1865" y="1155.9" textLength="1392" lengthAdjust="spacingAndGlyphs" xml:space="preserve">[21:06:27] [INFO] [dku.datasets.file] running compute_transactions_prepared_NP - Building Filesystem handler config:</text>
<text x="1865" y="1179.9" textLength="612" lengthAdjust="spacingAndGlyphs" xml:space="preserve">{&quot;path&quot;:&quot;/data/home/dkuacademy/dss/data-dir-design-</text>
<text x="1865" y="1203.9" textLength="1272" lengthAdjust="spacingAndGlyphs" xml:space="preserve">33333/uploads/ADVPARTSCENARIOSTEST3/datasets/transactions_&quot;,&quot;notReadyIfEmpty&quot;:false,&quot;filesSelectionRules&quot;:</text>
<text x="1865" y="1227.9" textLength="840" lengthAdjust="spacingAndGlyphs" xml:space="preserve">{&quot;mode&quot;:&quot;ALL&quot;,&quot;excludeRules&quot;:[],&quot;includeRules&quot;:[],&quot;explicitFiles&quot;:[]}}</text>
<text x="1865" y="1251.9" textLength="1368" lengthAdjust="spacingAndGlyphs" xml:space="preserve">[21:06:27] [INFO] [dku.datasets.ftplike] running compute_transactions_prepared_NP - Enumerating Filesystem dataset</text>
<text x="1865" y="1275.9" textLength="84" lengthAdjust="spacingAndGlyphs" xml:space="preserve">prefix=</text>
<text x="1865" y="1299.9" textLength="1368" lengthAdjust="spacingAndGlyphs" xml:space="preserve">[21:06:27] [DEBUG] [dku.fs.local] running compute_transactions_prepared_NP - Enumerating local filesystem prefix=/</text>
<text x="1865" y="1323.9" textLength="1248" lengthAdjust="spacingAndGlyphs" xml:space="preserve">[21:06:27] [DEBUG] [dku.fs.local] running compute_transactions_prepared_NP - Enumeration done nb_paths=1</text>
<text x="1865" y="1347.9" textLength="156" lengthAdjust="spacingAndGlyphs" xml:space="preserve">size=25105769</text>
<text x="1865" y="1371.9" textLength="1212" lengthAdjust="spacingAndGlyphs" xml:space="preserve">[21:06:27] [INFO] [dku.dataset.hash] running compute_transactions_prepared_NP - Caching readiness for</text>
<text x="1865" y="1395.9" textLength="1044" lengthAdjust="spacingAndGlyphs" xml:space="preserve">dataset__tara__ADVPARTSCENARIOSTEST3.transactions___NP s=READY h=gB6C836/zumK3TP57QN/Bg</text>
<text x="1865" y="1419.9" textLength="1260" lengthAdjust="spacingAndGlyphs" xml:space="preserve">[21:06:27] [INFO] [dku.flow.activity] running compute_transactions_prepared_NP - Checked source readiness</text>
<text x="1865" y="1443.9" textLength="516" lengthAdjust="spacingAndGlyphs" xml:space="preserve">ADVPARTSCENARIOSTEST3.transactions_ -&gt; true</text>
</g>
<filter id="sh" x="-10%" y="-30%" width="120%" height="160%"><feGaussianBlur stdDeviation="9"/></filter>
<clipPath id="tc"><path clip-rule="evenodd" d="M2500 1150 H3336 V1444 H2500 Z M2596 1241.7 H3296 V1364 H2596 Z"/></clipPath>
<g clip-path="url(#tc)">
<rect x="2596" y="1246" width="700" height="124" fill="#000" opacity="0.22" filter="url(#sh)"/>
</g>
<rect x="2596" y="1241.7" width="700" height="122.3" fill="#fff" opacity="0.86"/>
<rect x="3154.5" y="1241.7" width="2" height="122.3" fill="#dadada" />
<rect x="3156" y="1302" width="140" height="2" fill="#dadada" />
<text x="3199" y="1279.6" font-size="26" fill="#2a7de1" stroke="#2a7de1" stroke-width="0.45" textLength="54" lengthAdjust="spacingAndGlyphs" >VIEW</text>
<text x="3198" y="1341" font-size="26" fill="#2a7de1" stroke="#2a7de1" stroke-width="0.45" textLength="57" lengthAdjust="spacingAndGlyphs" >LOGS</text>
<rect x="2637.3" y="1290" width="38.2" height="35" fill="none" rx="2.5" stroke="#b8b8b8" stroke-width="2.7"/>
<rect x="2636" y="1288.7" width="40.7" height="9" fill="#b8b8b8" rx="2.5" />
<rect x="2642.7" y="1282.2" width="8.8" height="12" fill="#b8b8b8" rx="4.4" />
<rect x="2645.5" y="1285" width="3.2" height="7.5" fill="#fff" rx="1.6" />
<rect x="2661.4" y="1282.2" width="8.8" height="12" fill="#b8b8b8" rx="4.4" />
<rect x="2664.2000000000003" y="1285" width="3.2" height="7.5" fill="#fff" rx="1.6" />
<rect x="2645.8999999999996" y="1297" width="1.6" height="28" fill="#b8b8b8" />
<rect x="2655.7" y="1297" width="1.6" height="28" fill="#b8b8b8" />
<rect x="2665.0" y="1297" width="1.6" height="28" fill="#b8b8b8" />
<rect x="2637" y="1305.1000000000001" width="39" height="1.6" fill="#b8b8b8" />
<rect x="2637" y="1314.4" width="39" height="1.6" fill="#b8b8b8" />
<circle cx="2686" cy="1329.9" r="9.9" fill="#4aae50" />
<text x="2717" y="1291.4" font-size="26" fill="#333" stroke="#333" stroke-width="0.45" textLength="160" lengthAdjust="spacingAndGlyphs" >Job completed</text>
<text x="2717" y="1330.8" font-size="26" fill="#2a7de1" stroke="#2a7de1" stroke-width="0.45" textLength="260" lengthAdjust="spacingAndGlyphs" >Build transactions_copy</text>
<rect x="3334" y="2" width="2" height="80" fill="#555" />
<rect x="3334" y="82" width="2" height="1362" fill="#f3f3f3" />
<rect x="3326.5" y="802.3" width="10" height="55.6" fill="#a8a8a8" rx="4.5" />
</g>
</svg>
</body></html>
